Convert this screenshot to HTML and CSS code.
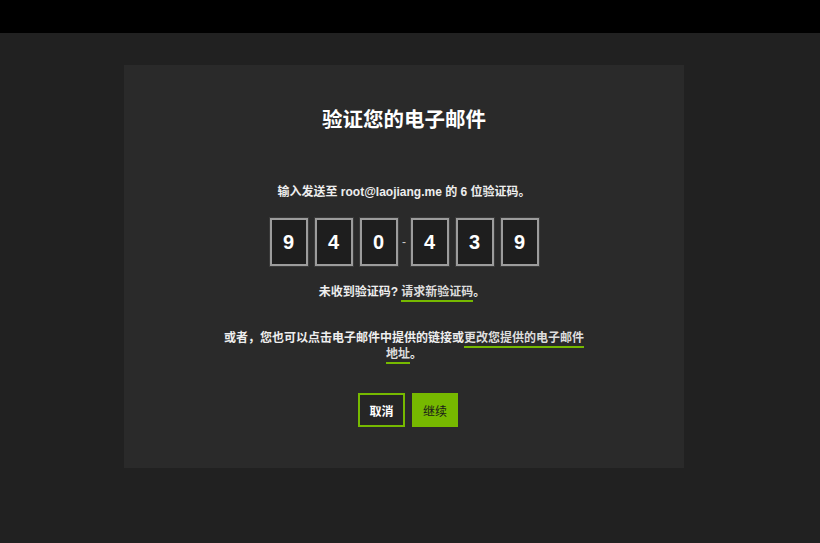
FILE: index.html
```html
<!DOCTYPE html>
<html lang="zh-CN">
<head>
    <meta charset="UTF-8">
    <title>验证您的电子邮件</title>
    <link rel="stylesheet" href="styles.css">
</head>
<body>
<div class="topbar"></div>
<div class="page">
    <div class="card">
        <h1 class="title">验证您的电子邮件</h1>
        <p class="hint">输入发送至 root@laojiang.me 的 6 位验证码。</p>
        <div class="code">
            <span class="digit">9</span>
            <span class="digit">4</span>
            <span class="digit">0</span>
            <span class="dash">-</span>
            <span class="digit">4</span>
            <span class="digit">3</span>
            <span class="digit">9</span>
        </div>
        <p class="resend">未收到验证码? <a href="#" class="link">请求新验证码</a>。</p>
        <p class="alt">或者，您也可以点击电子邮件中提供的链接或<a href="#" class="link">更改您提供的电子邮件地址</a>。</p>
        <div class="actions">
            <button class="btn btn_cancel">取消</button>
            <button class="btn btn_go">继续</button>
        </div>
    </div>
</div>
</body>
</html>
```

FILE: styles.css
```css
* {
    margin: 0;
    padding: 0;
    box-sizing: border-box;
}
body {
    background: #212121;
    color: #fff;
    font-family: "Liberation Sans", "Noto Sans CJK SC", sans-serif;
}
.topbar {
    height: 33px;
    background: #000;
}
.page {
    display: flex;
    justify-content: center;
    padding-top: 32px;
}
.card {
    width: 560px;
    margin-left: -12px;
    background: #2a2a2a;
    padding: 41px 0 41px 0;
    display: flex;
    flex-direction: column;
    align-items: center;
    text-align: center;
}
.title {
    font-size: 20.5px;
    line-height: 28px;
    font-weight: bold;
    color: #fff;
}
.hint {
    margin-top: 49px;
    font-size: 12px;
    line-height: 18px;
    font-weight: bold;
    color: #eee;
}
.code {
    margin-top: 17px;
    display: flex;
    align-items: center;
    gap: 7px;
}
.digit {
    width: 38px;
    height: 48px;
    border: 2px solid #9c9c9c;
    background: #1e1e1e;
    box-shadow: 0 0 0 1px #3a3a3a;
    display: flex;
    align-items: center;
    justify-content: center;
    font-size: 20px;
    font-weight: bold;
    color: #fff;
}
.dash {
    width: 5px;
    margin: 0 -3px;
    font-size: 12px;
    color: #ccc;
}
.resend {
    margin-top: 17px;
    margin-left: -4px;
    font-size: 12px;
    line-height: 18px;
    font-weight: bold;
    color: #eee;
}
.link {
    color: #ddd;
    text-decoration: none;
    padding-bottom: 1px;
    border-bottom: 2px solid #76b900;
}
.alt {
    margin-top: 29px;
    width: 368px;
    font-size: 12px;
    line-height: 16px;
    font-weight: bold;
    color: #eee;
}
.actions {
    margin-top: 31px;
    margin-left: 8px;
    display: flex;
    gap: 7px;
}
.btn {
    height: 34px;
    width: 47px;
    font-family: "Liberation Sans", "Noto Sans CJK SC", sans-serif;
    font-size: 12px;
    font-weight: bold;
    cursor: pointer;
}
.btn_cancel {
    border: 2px solid #76b900;
    background: #262626;
    color: #fff;
}
.btn_go {
    width: 46px;
    border: none;
    background: #76b900;
    color: #1a1a1a;
    font-weight: normal;
}
```
